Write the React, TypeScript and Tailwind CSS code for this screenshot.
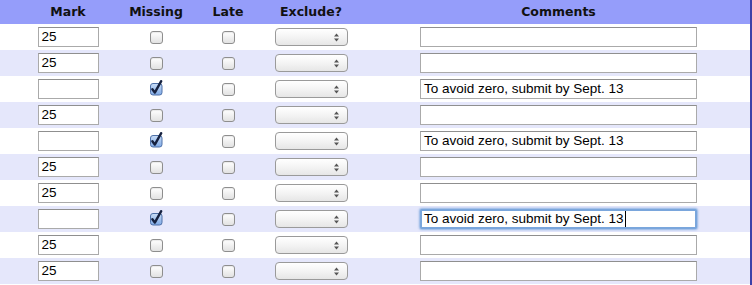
import React from "react";

type Row = { mark: string; missing: boolean; comment: string; focused?: boolean };

const rows: Row[] = [
  { mark: "25", missing: false, comment: "" },
  { mark: "25", missing: false, comment: "" },
  { mark: "", missing: true, comment: "To avoid zero, submit by Sept. 13" },
  { mark: "25", missing: false, comment: "" },
  { mark: "", missing: true, comment: "To avoid zero, submit by Sept. 13" },
  { mark: "25", missing: false, comment: "" },
  { mark: "25", missing: false, comment: "" },
  { mark: "", missing: true, comment: "To avoid zero, submit by Sept. 13", focused: true },
  { mark: "25", missing: false, comment: "" },
  { mark: "25", missing: false, comment: "" },
];

function Checkbox({ checked }: { checked?: boolean }) {
  if (checked) {
    return (
      <svg width="14" height="16" viewBox="0 0 14 16" className="block -mt-[3px]">
        <defs>
          <linearGradient id="cb" x1="0" y1="0" x2="0" y2="1">
            <stop offset="0" stopColor="#c9ddf7" />
            <stop offset="1" stopColor="#7fa9e6" />
          </linearGradient>
        </defs>
        <rect x="1.5" y="3.5" width="11.5" height="11.5" rx="2.5" fill="url(#cb)" stroke="#4f71a8" />
        <path d="M3.4 9.2 L5.8 12.6 L12.2 1.2" fill="none" stroke="#16213f" strokeWidth="2.4" strokeLinecap="round" strokeLinejoin="round" />
      </svg>
    );
  }
  return (
    <div className="w-[13px] h-[13px] rounded-[3px] border border-[#8e8e8e] bg-gradient-to-b from-white to-[#e2e2e2] shadow-[inset_0_1px_1px_rgba(0,0,0,0.08)]" />
  );
}

function Select() {
  return (
    <div className="w-[73px] h-[18px] rounded-[4px] border border-[#9a9a9a] bg-gradient-to-b from-white via-[#f4f4f4] to-[#e6e6e6] flex items-center justify-end pr-[8px]">
      <svg width="5" height="9" viewBox="0 0 5 9" className="block">
        <path d="M0 3.5 L2.5 0.5 L5 3.5 Z" fill="#555" />
        <path d="M0 5.5 L2.5 8.5 L5 5.5 Z" fill="#555" />
      </svg>
    </div>
  );
}

function TextBox({ value, width, focused }: { value: string; width: string; focused?: boolean }) {
  return (
    <div
      className={
        width +
        " h-[20px] bg-white flex items-center text-[13.5px] text-black leading-none " +
        (focused
          ? "border-2 border-[#7aa6dc] rounded-[2px] shadow-[0_0_2px_1px_rgba(110,160,220,0.7)] pl-[2px]"
          : "border border-[#aaaaaa] border-t-[#8f8f8f] pl-[3px]")
      }
      style={{ fontFamily: '"Liberation Sans", Arial, sans-serif' }}
    >
      <span>{value}</span>
      {focused && <span className="inline-block w-[1px] h-[16px] bg-black ml-[1px]" />}
    </div>
  );
}

export default function App() {
  return (
    <div className="w-[752px] h-[285px] bg-white flex">
      <div className="w-[750px] flex flex-col">
        <div
          className="h-[24px] bg-[#959dfa] flex items-center text-[12.5px] font-bold text-[#111]"
          style={{ fontFamily: '"DejaVu Sans", Verdana, sans-serif' }}
        >
          <div className="ml-[20px] w-[96px] text-center">Mark</div>
          <div className="w-[80px] text-center">Missing</div>
          <div className="w-[64px] text-center">Late</div>
          <div className="w-[102px] text-center">Exclude?</div>
          <div className="ml-[6px] w-[381px] text-center">Comments</div>
        </div>
        {rows.map((r, i) => (
          <div key={i} className={"h-[26px] flex items-center " + (i % 2 === 1 ? "bg-[#e5e7fb]" : "bg-white")}>
            <div className="ml-[20px] w-[96px] flex justify-center">
              <TextBox value={r.mark} width="w-[61px]" />
            </div>
            <div className="w-[80px] flex justify-center">
              <Checkbox checked={r.missing} />
            </div>
            <div className="w-[64px] flex justify-center">
              <Checkbox />
            </div>
            <div className="w-[102px] flex justify-center">
              <Select />
            </div>
            <div className="ml-[6px] w-[381px] flex justify-center">
              <TextBox value={r.comment} width="w-[277px]" focused={r.focused} />
            </div>
          </div>
        ))}
      </div>
      <div className="w-[2px] bg-[#3d41a8]" />
    </div>
  );
}
